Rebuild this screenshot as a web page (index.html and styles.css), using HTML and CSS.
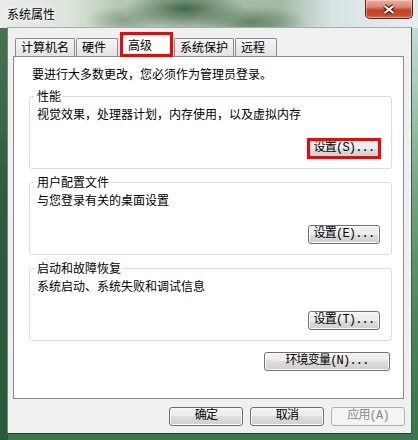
FILE: index.html
```html
<!DOCTYPE html>
<html lang="zh-CN">
<head>
    <meta charset="UTF-8">
    <meta name="viewport" content="width=device-width, initial-scale=1.0">
    <title>系统属性</title>
    <link rel="stylesheet" href="styles.css">
</head>
<body>
<div class="window">
    <div class="titlebar">
        <span class="title">系统属性</span>
        <button class="close" title="关闭">
            <svg width="14" height="11" viewBox="0 0 14 11">
                <path d="M2.5 2 L11.5 9 M11.5 2 L2.5 9" stroke="#4a1a12" stroke-width="4.2" fill="none"/>
                <path d="M2.5 2 L11.5 9 M11.5 2 L2.5 9" stroke="#fff" stroke-width="2.2" fill="none"/>
            </svg>
        </button>
    </div>

    <div class="client">
        <div class="tabs">
            <div class="tab">计算机名</div>
            <div class="tab">硬件</div>
            <div class="tab active marked">高级</div>
            <div class="tab">系统保护</div>
            <div class="tab">远程</div>
        </div>

        <div class="panel">
            <p class="intro">要进行大多数更改，您必须作为管理员登录。</p>

            <fieldset class="group">
                <legend>性能</legend>
                <p class="desc">视觉效果，处理器计划，内存使用，以及虚拟内存</p>
                <div class="group-actions">
                    <button class="btn small marked">设置(S)...</button>
                </div>
            </fieldset>

            <fieldset class="group">
                <legend>用户配置文件</legend>
                <p class="desc">与您登录有关的桌面设置</p>
                <div class="group-actions">
                    <button class="btn small">设置(E)...</button>
                </div>
            </fieldset>

            <fieldset class="group">
                <legend>启动和故障恢复</legend>
                <p class="desc">系统启动、系统失败和调试信息</p>
                <div class="group-actions">
                    <button class="btn small">设置(T)...</button>
                </div>
            </fieldset>

            <div class="env-row">
                <button class="btn wide">环境变量(N)...</button>
            </div>
        </div>

        <div class="dialog-buttons">
            <button class="btn">确定</button>
            <button class="btn">取消</button>
            <button class="btn" disabled>应用(A)</button>
        </div>
    </div>
</div>
</body>
</html>
```

FILE: styles.css
```css
/* 系统属性 对话框 */
* {
    box-sizing: border-box;
}

body {
    margin: 0;
    font-family: "Noto Sans CJK SC", sans-serif;
    font-size: 12px;
    color: #000;
}

/* Aero 玻璃边框 */
.window {
    width: 418px;
    height: 440px;
    display: flex;
    flex-direction: column;
    padding: 0 6px 6px 7px;
    background:
        radial-gradient(ellipse 60px 20px at 185px 9px, rgba(48, 88, 56, 0.85), rgba(48, 88, 56, 0)),
        radial-gradient(ellipse 55px 16px at 252px 22px, rgba(70, 108, 74, 0.7), rgba(70, 108, 74, 0)),
        radial-gradient(ellipse 40px 14px at 125px 20px, rgba(105, 135, 105, 0.6), rgba(105, 135, 105, 0)),
        linear-gradient(to right, #e8ede8 0, #dbe4da 70px, #b7c8b5 120px, #a3b8a3 280px, #d6e2e4 330px, #e6eef1 100%) top / 100% 28px no-repeat,
        linear-gradient(to bottom, #4a7657 0, #2e5c3b 200px, #285a37 100%) left / 8px 100% no-repeat,
        linear-gradient(to bottom, #cfe2e8 0, #a8cab6 90px, #6fa37c 200px, #4b845a 320px, #3a7649 100%) right / 7px 100% no-repeat,
        #3a7a4a;
}

.titlebar {
    height: 27px;
    display: flex;
    align-items: center;
    justify-content: space-between;
}

.title {
    line-height: 16px;
    text-shadow: 0 0 6px #fff, 0 0 3px #fff;
}

.close {
    align-self: flex-start;
    width: 48px;
    height: 19px;
    margin-right: -1px;
    padding: 0;
    display: flex;
    align-items: center;
    justify-content: center;
    border: 1px solid #5b2219;
    border-top: 0;
    border-radius: 0 0 5px 5px;
    background: linear-gradient(#eab0a2 0, #d98371 40%, #c54328 55%, #c64b30 85%, #d9765c 100%);
    box-shadow: inset 0 0 0 1px rgba(255, 255, 255, 0.35);
}

.client {
    flex: 1;
    display: flex;
    flex-direction: column;
    padding: 0 7px 7px 5px;
    background-color: #f0f0f0;
    border: 1px solid;
    border-color: #9fb0a4 #3f5a47 #1f3d29 #6d8a74;
}

/* 选项卡 */
.tabs {
    display: flex;
    align-items: flex-end;
    gap: 1px;
    height: 24px;
    margin-top: 4px;
    padding-left: 2px;
    position: relative;
    z-index: 1;
}

.tab {
    height: 18px;
    min-width: 42px;
    padding: 0 5px;
    line-height: 16px;
    border: 1px solid #898c95;
    border-bottom: 0;
    border-radius: 2px 2px 0 0;
    background: linear-gradient(#f5f5f5, #e3e3e3);
}

.tab.active {
    height: 25px;
    min-width: 53px;
    margin: 0 0 -1px 1px;
    padding: 4px 6px 0 7px;
    background-color: #fff;
    background-image: none;
}

/* 红框标注 */
.tab.marked {
    border-radius: 0;
    outline: 3px solid #f00;
    outline-offset: -3px;
}

.panel {
    background-color: #fff;
    border: 1px solid #898c95;
    padding: 9px 11px 27px 15px;
}

.intro {
    margin: 0 0 6px 3px;
    line-height: 16px;
}

/* 分组框 */
.group {
    margin: 0;
    min-width: 0;
    padding: 0 11px 10px 7px;
    border: 1px solid #d5dfe5;
    border-radius: 3px;
}

.group + .group {
    margin-top: 5px;
}

.group legend {
    margin-left: -3px;
    padding: 0 1px 0 3px;
    line-height: 16px;
}

.desc {
    margin: 2px 0 0;
    line-height: 16px;
}

.group-actions {
    display: flex;
    justify-content: flex-end;
    margin-top: 17px;
}

.env-row {
    display: flex;
    justify-content: flex-end;
    margin: 11px 2px 0 0;
}

/* 按钮 */
.btn {
    height: 19px;
    padding: 0;
    white-space: nowrap;
    font-family: "Liberation Mono", "Noto Sans CJK SC", monospace;
    font-size: 12px;
    line-height: 17px;
    letter-spacing: -0.8px;
    color: #000;
    border: 1px solid #707070;
    border-radius: 3px;
    background: linear-gradient(#f2f2f2 0, #ebebeb 50%, #dddddd 50%, #cfcfcf 100%);
    box-shadow: inset 0 0 0 1px #fbfbfb;
}

.btn.small {
    width: 72px;
}

.btn.wide {
    width: 126px;
}

.btn.marked {
    border-radius: 0;
    outline: 3px solid #f00;
    outline-offset: -2px;
}

.btn:disabled {
    color: #8a8a8a;
    border-color: #adb2b5;
    background: #f4f4f4;
    box-shadow: none;
}

.dialog-buttons {
    display: flex;
    justify-content: flex-end;
    gap: 7px;
    margin: 8px -1px 0 0;
}

.dialog-buttons .btn {
    width: 74px;
}
```
